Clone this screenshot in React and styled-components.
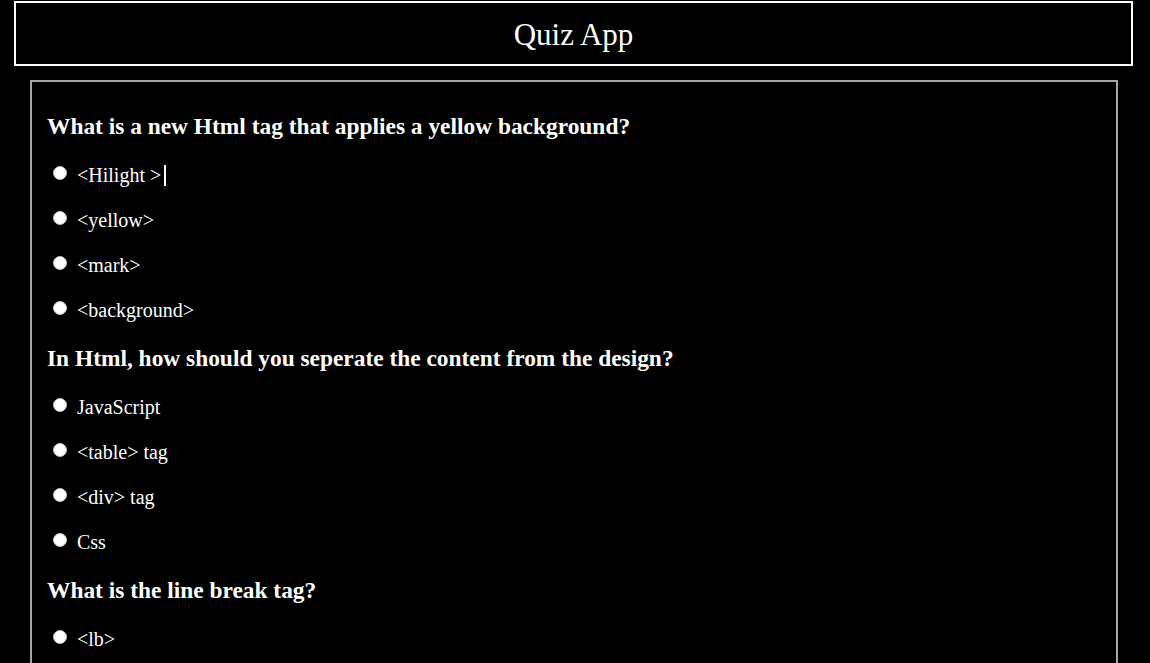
import React from "react";
import styled, { createGlobalStyle } from "styled-components";

const GlobalStyle = createGlobalStyle`
  html, body {
    margin: 0;
    padding: 0;
    background: #000;
    overflow: hidden;
  }
  body {
    font-family: "Liberation Serif", "Times New Roman", serif;
    font-size: 20px;
    color: #fff;
  }
`;

const Page = styled.div`
  height: 663px;
  overflow: hidden;
  padding-top: 1px;
  box-sizing: border-box;
`;

const Header = styled.header`
  margin: 0 17px 0 14px;
  border: 2px solid #fff;
  padding-top: 15px;
  box-sizing: border-box;
  height: 65px;
  display: flex;
  justify-content: center;
  align-items: flex-start;
`;

const Title = styled.h2`
  margin: 0;
  font-size: 31px;
  font-weight: normal;
  line-height: 34px;
`;

const QuizBox = styled.main`
  margin: 14px 32px 0 30px;
  border: 2px solid #a6a6a6;
  padding: 31px 15px 0 15px;
  min-height: 700px;
`;

const QuestionBlock = styled.section`
  margin-bottom: 23px;
`;

const Question = styled.h3`
  margin: 0 0 24px;
  font-size: 23.4px;
  font-weight: bold;
  line-height: 27px;
`;

const Options = styled.div`
  display: flex;
  flex-direction: column;
  gap: 22px;
`;

const Option = styled.label`
  display: flex;
  align-items: flex-start;
  line-height: 23px;
  cursor: pointer;
`;

const Radio = styled.input.attrs({ type: "radio" })`
  appearance: none;
  -webkit-appearance: none;
  width: 14px;
  height: 14px;
  margin: 2px 10px 0 6px;
  border-radius: 50%;
  background: #fff;
  border: 1px solid #c4c4c4;
  box-sizing: border-box;
  flex-shrink: 0;
`;

const Caret = styled.span`
  display: inline-block;
  width: 2px;
  height: 21px;
  background: #fff;
  margin-left: 3px;
  vertical-align: -4px;
`;

const questions = [
  {
    q: "What is a new Html tag that applies a yellow background?",
    options: ["<Hilight >", "<yellow>", "<mark>", "<background>"],
  },
  {
    q: "In Html, how should you seperate the content from the design?",
    options: ["JavaScript", "<table> tag", "<div> tag", "Css"],
  },
  {
    q: "What is the line break tag?",
    options: ["<lb>", "<br>", "<break>", "<newline>"],
  },
];

export default function App() {
  return (
    <>
      <GlobalStyle />
      <Page>
        <Header>
          <Title>Quiz App</Title>
        </Header>
        <QuizBox>
          {questions.map((item, qi) => (
            <QuestionBlock key={qi}>
              <Question>{item.q}</Question>
              <Options>
                {item.options.map((opt, oi) => (
                  <Option key={oi}>
                    <Radio name={`q${qi}`} />
                    <span>
                      {opt}
                      {qi === 0 && oi === 0 && <Caret />}
                    </span>
                  </Option>
                ))}
              </Options>
            </QuestionBlock>
          ))}
        </QuizBox>
      </Page>
    </>
  );
}
